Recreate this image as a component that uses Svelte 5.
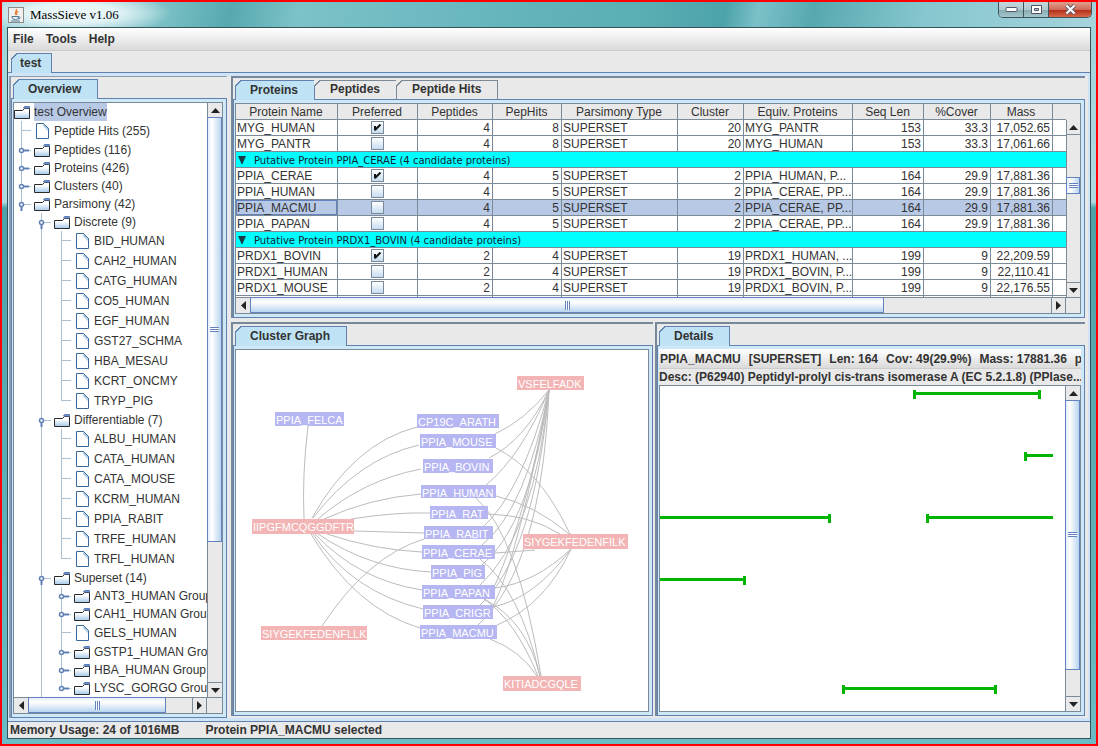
<script>
  const leaves = (names) => names.map((label) => ({ label, kind: 'file' }));
  const groups = (names) => names.map((label) => ({ label, kind: 'folder', open: false }));

  const tree = [
    { label: 'Peptide Hits (255)', kind: 'file' },
    { label: 'Peptides (116)', kind: 'folder', open: false },
    { label: 'Proteins (426)', kind: 'folder', open: false },
    { label: 'Clusters (40)', kind: 'folder', open: false },
    {
      label: 'Parsimony (42)', kind: 'folder', open: true,
      children: [
        {
          label: 'Discrete (9)', kind: 'folder', open: true,
          children: leaves(['BID_HUMAN', 'CAH2_HUMAN', 'CATG_HUMAN', 'CO5_HUMAN', 'EGF_HUMAN', 'GST27_SCHMA', 'HBA_MESAU', 'KCRT_ONCMY', 'TRYP_PIG'])
        },
        {
          label: 'Differentiable (7)', kind: 'folder', open: true,
          children: leaves(['ALBU_HUMAN', 'CATA_HUMAN', 'CATA_MOUSE', 'KCRM_HUMAN', 'PPIA_RABIT', 'TRFE_HUMAN', 'TRFL_HUMAN'])
        },
        {
          label: 'Superset (14)', kind: 'folder', open: true, more: true,
          children: [
            ...groups(['ANT3_HUMAN Group', 'CAH1_HUMAN Group']),
            ...leaves(['GELS_HUMAN']),
            ...groups(['GSTP1_HUMAN Group', 'HBA_HUMAN Group', 'LYSC_GORGO Group'])
          ]
        }
      ]
    }
  ];

  const columns = [
    ['Protein Name', 102], ['Preferred', 80], ['Peptides', 75], ['PepHits', 69],
    ['Parsimony Type', 116], ['Cluster', 66], ['Equiv. Proteins', 109],
    ['Seq Len', 71], ['%Cover', 67], ['Mass', 62]
  ];

  const rows = [
    ['MYG_HUMAN', true, 4, 8, 20, 'MYG_PANTR', 153, '33.3', '17,052.65'],
    ['MYG_PANTR', false, 4, 8, 20, 'MYG_HUMAN', 153, '33.3', '17,061.66'],
    'Putative Protein PPIA_CERAE (4 candidate proteins)',
    ['PPIA_CERAE', true, 4, 5, 2, 'PPIA_HUMAN, P...', 164, '29.9', '17,881.36'],
    ['PPIA_HUMAN', false, 4, 5, 2, 'PPIA_CERAE, PP...', 164, '29.9', '17,881.36'],
    ['PPIA_MACMU', false, 4, 5, 2, 'PPIA_CERAE, PP...', 164, '29.9', '17,881.36'],
    ['PPIA_PAPAN', false, 4, 5, 2, 'PPIA_CERAE, PP...', 164, '29.9', '17,881.36'],
    'Putative Protein PRDX1_BOVIN (4 candidate proteins)',
    ['PRDX1_BOVIN', true, 2, 4, 19, 'PRDX1_HUMAN, ...', 199, '9', '22,209.59'],
    ['PRDX1_HUMAN', false, 2, 4, 19, 'PRDX1_BOVIN, P...', 199, '9', '22,110.41'],
    ['PRDX1_MOUSE', false, 2, 4, 19, 'PRDX1_BOVIN, P...', 199, '9', '22,176.55']
  ];
  const selected = 'PPIA_MACMU';

  // Graph nodes: label, x, y, width, height, kind
  const nodes = [
    ['PPIA_FELCA', 39, 62, 69, 14, 'protein'],
    ['CP19C_ARATH', 181, 64, 82, 14, 'protein'],
    ['PPIA_MOUSE', 184, 84, 76, 14, 'protein'],
    ['PPIA_BOVIN', 187, 109, 70, 14, 'protein'],
    ['PPIA_HUMAN', 185, 135, 75, 13, 'protein'],
    ['PPIA_RAT', 194, 156, 58, 13, 'protein'],
    ['PPIA_RABIT', 188, 176, 69, 13, 'protein'],
    ['PPIA_CERAE', 186, 195, 73, 14, 'protein'],
    ['PPIA_PIG', 195, 215, 54, 14, 'protein'],
    ['PPIA_PAPAN', 186, 235, 73, 14, 'protein'],
    ['PPIA_CRIGR', 187, 255, 70, 14, 'protein'],
    ['PPIA_MACMU', 184, 275, 77, 14, 'protein'],
    ['VSFELFADK', 281, 26, 67, 14, 'peptide'],
    ['SIYGEKFEDENFILK', 287, 184, 105, 15, 'peptide'],
    ['KITIADCGQLE', 267, 326, 78, 15, 'peptide'],
    ['SIYGEKFEDENFLLK', 25, 276, 106, 14, 'peptide'],
    ['IIPGFMCQGGDFTR', 16, 169, 102, 15, 'peptide']
  ];

  const edges = [
    'M72 76Q66 125 68 169',
    'M76 168Q118 93 181 77', 'M77 168Q122 109 183 95', 'M82 169Q127 130 185 119',
    'M88 169Q134 148 185 144', 'M115 169Q159 162 194 163', 'M118 181L188 183',
    'M91 184Q139 200 186 202', 'M82 184Q134 219 195 222', 'M79 184Q122 230 186 240',
    'M77 184Q116 242 187 259', 'M75 184Q120 259 184 278', 'M86 276Q132 206 188 189',
    'M259 84Q289 70 313 40', 'M253 108Q289 90 313 40', 'M250 135Q286 105 313 40',
    'M246 178Q286 142 313 40', 'M246 195Q290 160 313 40',
    'M246 215Q294 176 313 40', 'M244 235Q298 186 313 40', 'M259 235Q292 160 313 40',
    'M244 255Q298 206 313 40', 'M257 257Q284 200 313 40', 'M242 275Q306 216 313 40',
    'M260 98Q304 120 334 184', 'M260 146Q299 155 333 184', 'M252 164Q294 165 324 184',
    'M259 203L299 200', 'M259 238Q299 233 335 199', 'M257 257Q299 248 335 199',
    'M261 275Q309 255 335 199',
    'M240 148Q282 185 305 326', 'M244 209Q284 240 304 326', 'M248 249Q279 270 302 326',
    'M248 249Q290 270 304 326', 'M254 289Q284 300 301 326'
  ];

  // Matched peptide segments: x, y, length, start cap, end cap
  const segments = [
    [253, 8, 128, true, true],
    [364, 70, 29, true, false],
    [0, 132, 171, false, true],
    [266, 132, 127, true, false],
    [0, 194, 86, false, true],
    [182, 303, 155, true, true]
  ];
</script>

{#snippet bar(dir, name, before, size, after)}
  <div class="scroll {dir}">
    <button class="arrow" aria-label="{name} back">
      <svg width="9" height="9" viewBox="0 0 9 9"><path d={dir === 'v' ? 'M0 7L4.500 2L9 7Z' : 'M7 0L2 4.500L7 9Z'} /></svg>
    </button>
    <div class="track">
      <span style:flex-grow={before}></span>
      <span class="thumb" style:flex-grow={size}><i></i></span>
      <span style:flex-grow={after}></span>
    </div>
    <button class="arrow" aria-label="{name} forward">
      <svg width="9" height="9" viewBox="0 0 9 9"><path d={dir === 'v' ? 'M0 2L4.500 7L9 2Z' : 'M2 0L7 4.500L2 9Z'} /></svg>
    </button>
  </div>
{/snippet}

{#snippet folder()}
  <svg class="icon" width="16" height="16" viewBox="0 0 16 16">
    <defs><linearGradient id="fold" x1="0" y1="0" x2="0" y2="1"><stop offset="0.3" stop-color="#fff" /><stop offset="1" stop-color="#a4c8ea" /></linearGradient></defs>
    <path d="M.5 14.500V6.500H8.500L10.500 4.500H15.500V14.500Z" fill="url(#fold)" stroke="#2a2a2a" />
    <path d="M9.500 4L10.500 2.500H15.500V4Z" fill="#86a8dc" stroke="#5a7cba" />
  </svg>
{/snippet}

{#snippet file()}
  <svg class="icon" width="16" height="16" viewBox="0 0 16 16">
    <path d="M2.500 .5H9.500L14.500 5.500V15.500H2.500Z" fill="#fff" stroke="#3a6a9c" />
    <path d="M9.500 1L14 5.500V8L9 3Z" fill="#a8c8e4" />
    <path d="M9.500 .5L14.500 5.500" stroke="#3a6a9c" />
  </svg>
{/snippet}

{#snippet branch(items)}
  <ul>
    {#each items as item}
      <li class:more={item.more}>
        <div class="row {item.kind}">
          {#if item.kind === 'folder'}
            <svg class="knob" width="12" height="12" viewBox="0 0 12 12">
              <path d={item.open ? 'M3.500 5V11' : 'M5 4.500H11'} stroke="#5f80b4" stroke-width="2" />
              <circle cx="3.500" cy="4.500" r="2" fill="#fff" stroke="#5f80b4" stroke-width="1.500" />
            </svg>
            {@render folder()}
          {:else}
            {@render file()}
          {/if}
          <span>{item.label}</span>
        </div>
        {#if item.children}{@render branch(item.children)}{/if}
      </li>
    {/each}
  </ul>
{/snippet}

<div class="window">
  <header class="title">
    <svg class="logo" width="16" height="16" viewBox="0 0 16 16">
      <rect x=".5" y=".5" width="15" height="15" fill="#f0f0ee" stroke="#8a8a8a" />
      <path d="M8 2C10 4 5.500 5 8 8M10 4C7.500 5.500 9.500 6.500 8.500 8" fill="none" stroke="#e8762c" stroke-width="1.200" />
      <path d="M4 9.500H10.500C10.500 12 9.500 12.500 7.500 12.500S4 12 4 9.500M10.500 10C13 9.500 12.500 12 10 12M3 14H12" fill="none" stroke="#4d7a9c" />
    </svg>
    <h1>MassSieve v1.06</h1>
    <div class="controls">
      <button aria-label="Minimize"><svg width="13" height="7" viewBox="0 0 13 7"><rect x="1" y="1.500" width="11" height="4" rx="1" fill="#fff" stroke="#556" /></svg></button>
      <button aria-label="Maximize"><svg width="13" height="11" viewBox="0 0 13 11"><path d="M1.500 1.500H11.500V9.500H1.500ZM4.500 4.500V6.500H8.500V4.500Z" fill="#fff" fill-rule="evenodd" stroke="#556" /></svg></button>
      <button class="close" aria-label="Close"><svg width="13" height="11" viewBox="0 0 13 11"><path d="M2.500 1.500L10.500 9.500M10.500 1.500L2.500 9.500" stroke="#556" stroke-width="4" /><path d="M2.500 1.500L10.500 9.500M10.500 1.500L2.500 9.500" stroke="#fff" stroke-width="2.200" /></svg></button>
    </div>
  </header>

  <main class="client">
    <nav class="menu"><button>File</button><button>Tools</button><button>Help</button></nav>
    <div class="tabs outer"><button class="tab on">test</button></div>

    <div class="work">
      <div class="split">
        <section class="pane left">
          <div class="tabs"><button class="tab on">Overview</button></div>
          <div class="body">
            <div class="inner treebox">
              <div class="tree">
                <div class="row root">{@render folder()}<span class="sel">test Overview</span></div>
                {@render branch(tree)}
              </div>
              {@render bar('v', 'Overview vertical', 0, 424, 141)}
              {@render bar('h', 'Overview horizontal', 0, 136, 26)}
              <div class="corner"></div>
            </div>
          </div>
        </section>

        <div class="right">
          <section class="pane">
            <div class="tabs">
              <button class="tab on">Proteins</button><button class="tab">Peptides</button><button class="tab">Peptide Hits</button>
            </div>
            <div class="body">
              <div class="inner grid">
                <div class="clip">
                  <table>
                    <colgroup>
                      {#each columns as [, w]}<col style:width="{w}px" />{/each}
                      <col />
                    </colgroup>
                    <thead>
                      <tr>{#each columns as [name]}<th>{name}</th>{/each}<th></th></tr>
                    </thead>
                    <tbody>
                      {#each rows as r}
                        {#if typeof r === 'string'}
                          <tr class="group"><td colspan="11"><svg width="8" height="8" viewBox="0 0 8 8"><path d="M0 0H8L4.500 8H3.500Z" /></svg>{r}</td></tr>
                        {:else}
                          <tr class:picked={r[0] === selected}>
                            <td>{r[0]}</td>
                            <td class="check"><input type="checkbox" aria-label="Preferred {r[0]}" checked={r[1]} /></td>
                            <td class="num">{r[2]}</td>
                            <td class="num">{r[3]}</td>
                            <td>SUPERSET</td>
                            <td class="num">{r[4]}</td>
                            <td>{r[5]}</td>
                            <td class="num">{r[6]}</td>
                            <td class="num">{r[7]}</td>
                            <td class="num">{r[8]}</td>
                            <td></td>
                          </tr>
                        {/if}
                      {/each}
                      <tr>{#each columns as _}<td></td>{/each}<td></td></tr>
                    </tbody>
                  </table>
                </div>
                <div class="side">
                  <div class="cap"></div>
                  {@render bar('v', 'Proteins vertical', 43, 15, 88)}
                </div>
                {@render bar('h', 'Proteins horizontal', 0, 632, 167)}
                <div class="corner"></div>
              </div>
            </div>
          </section>

          <div class="lower">
            <section class="pane">
              <div class="tabs"><button class="tab on">Cluster Graph</button></div>
              <div class="body">
                <div class="inner">
                  <svg class="canvas" role="img" aria-label="Cluster Graph">
                    {#each edges as d}<path {d} class="edge" />{/each}
                    {#each nodes as [label, x, y, w, h, kind]}
                      <rect {x} {y} width={w} height={h} class={kind} />
                      <text x={x + 1} y={y + 12}>{label}</text>
                    {/each}
                  </svg>
                </div>
              </div>
            </section>

            <section class="pane details">
              <div class="tabs"><button class="tab on">Details</button></div>
              <div class="body">
                <div class="facts">
                  <span>PPIA_MACMU</span><span>[SUPERSET]</span><span>Len: 164</span><span>Cov: 49(29.9%)</span><span>Mass: 17881.36</span><span>pI</span>
                </div>
                <div class="desc">Desc: (P62940) Peptidyl-prolyl cis-trans isomerase A (EC 5.2.1.8) (PPIase...</div>
                <div class="inner plot">
                  <svg class="canvas" role="img" aria-label="Matched peptides">
                    {#each segments as [x, y, len, start, end]}
                      <rect {x} y={y - 2} width={len} height="3" />
                      {#if start}<rect {x} y={y - 4} width="3" height="9" />{/if}
                      {#if end}<rect x={x + len - 3} y={y - 4} width="3" height="9" />{/if}
                    {/each}
                  </svg>
                  {@render bar('v', 'Details vertical', 0, 267, 26)}
                </div>
              </div>
            </section>
          </div>
        </div>
      </div>
    </div>

    <footer class="status"><span>Memory Usage: 24 of 1016MB</span><span>Protein PPIA_MACMU selected</span></footer>
  </main>
</div>

<style>
  :global(body) { margin: 0; }
  .window, .window * { box-sizing: border-box; }
  .window {
    --face: #e9e9e9;
    --tab: #bfe3f4;
    --line: #5f82b0;
    --grey: #7a8a99;
    --pick: #b8c9e6;
    --ink: #333;
    display: flex;
    flex-direction: column;
    height: 100vh;
    overflow: hidden;
    border: 2px solid #f00;
    background: linear-gradient(#9fd2da 0, #b0dae2 200px, #4fa2a8 206px, #5fb0b6 500px, #6bbcc4 100%);
    color: var(--ink);
    font: 12px/16px "Liberation Sans", Arial, sans-serif;
  }
  button { font: inherit; color: inherit; margin: 0; padding: 0; border: 0; background: none; }

  .title {
    display: flex;
    align-items: center;
    gap: 6px;
    flex: none;
    height: 25px;
    padding-left: 6px;
    background:
      radial-gradient(ellipse 100px 22px at 70px 11px, #eef8fa 0, #e4f4f6 45%, transparent 100%),
      linear-gradient(100deg, #9fd2da 0, #8ccad0 12%, #6db8bd 17%, #56a9ae 21%, #7cc2c8 27%, #66b6bc 45%, #5aaeb4 58%, #4ca3a9 66%, #7cc0c8 69%, #56a9ae 74%, #86c6ce 84%, #a6d4dc 100%);
  }
  .logo { flex: none; }
  h1 { margin: 0; flex: 1; font: 13px/16px "Liberation Serif", serif; color: #000; }
  .controls {
    display: flex;
    align-self: flex-start;
    height: 16px;
    margin-right: 4px;
    border: 1px solid #3c555c;
    border-top: 0;
    border-radius: 0 0 5px 5px;
    overflow: hidden;
  }
  .controls button {
    display: flex;
    align-items: center;
    justify-content: center;
    width: 25px;
    border-right: 1px solid #3c555c;
    background: linear-gradient(#c4d8dc 0, #b0c9ce 50%, #86aab2 51%, #a4c6cc 100%);
  }
  .controls .close { width: 42px; border: 0; background: linear-gradient(#e0a090 0, #cf6a58 50%, #b02a18 51%, #d86848 100%); }

  .client {
    display: flex;
    flex-direction: column;
    flex: 1;
    min-height: 0;
    margin: 0 5px 5px;
    border: 1px solid #34545c;
    background: var(--face);
  }
  .menu {
    display: flex;
    gap: 12px;
    flex: none;
    height: 23px;
    padding-left: 5px;
    border-bottom: 1px solid #ccc;
    background: linear-gradient(#fff, #dadada);
    font-weight: bold;
  }

  .tabs { display: flex; flex: none; height: 20px; padding-left: 2px; box-shadow: inset 0 -1px var(--line); }
  .tabs.outer { height: 22px; padding: 2px 0 0 3px; }
  .tab {
    position: relative;
    height: 20px;
    padding: 0 16px 2px 15px;
    border: 1px solid var(--grey);
    border-left-width: 0;
    border-bottom-color: var(--line);
    background: var(--face);
    font-weight: bold;
  }
  .tab.on { padding-left: 14px; border: 1px solid var(--line); border-bottom: 0; background: var(--tab); }
  .tab::before {
    content: "";
    position: absolute;
    left: -1px;
    top: -1px;
    width: 7px;
    height: 7px;
    background: linear-gradient(135deg, var(--face) 4px, var(--grey) 4px, var(--grey) 5px, transparent 5px);
  }
  .tab.on::before { background: linear-gradient(135deg, var(--face) 4px, var(--line) 4px, var(--line) 5px, transparent 5px); }
  .tabs.outer .tab { padding: 0 10px 2px 8px; }

  .work {
    display: flex;
    flex: 1;
    min-height: 0;
    padding: 3px 2px 3px 1px;
    border-bottom: 1px solid var(--line);
    background: #cfe4f6;
  }
  .split {
    display: grid;
    grid-template-columns: 218px minmax(0, 1fr);
    gap: 4px;
    flex: 1;
    min-height: 0;
    padding-right: 3px;
    background: var(--face);
  }
  .right { display: grid; grid-template-rows: 242px minmax(0, 1fr); gap: 4px; min-height: 0; padding-bottom: 2px; }
  .lower { display: grid; grid-template-columns: 422fr 430fr; gap: 2px; min-height: 0; min-width: 0; }

  .pane {
    display: flex;
    flex-direction: column;
    min-width: 0;
    min-height: 0;
    padding-top: 2px;
    border: 2px solid #76889a;
    border-right: 0;
    border-bottom: 0;
  }
  .pane.left { border-top-width: 1px; border-color: #8e9cb0; }
  .body {
    display: flex;
    flex-direction: column;
    flex: 1;
    min-height: 0;
    padding: 3px 3px 3px 1px;
    border: 1px solid var(--line);
    border-top: 0;
    background: #cfe8f8;
  }
  .inner { flex: 1; min-height: 0; border: 1px solid var(--grey); background: #fff; overflow: hidden; }

  .treebox { display: grid; grid-template: minmax(0, 1fr) 16px / minmax(0, 1fr) 15px; }
  .tree { overflow: hidden; white-space: nowrap; }
  .tree ul { margin: 0; padding: 0 0 0 20px; list-style: none; }
  .row { position: relative; display: flex; align-items: center; gap: 4px; height: 18px; }
  .row.file { height: 20px; }
  .root .sel { padding: 1px 0 1px; background: var(--pick); }
  .icon { flex: none; }
  .knob { position: absolute; left: -16px; top: 5px; }
  .tree li { position: relative; }
  .tree li::before {
    content: "";
    position: absolute;
    left: -13px;
    top: 0;
    bottom: 0;
    width: 1px;
    background: #a9c1d2;
  }
  .tree li:last-child:not(.more)::before { bottom: auto; height: 10px; }
  .tree li .row::before {
    content: "";
    position: absolute;
    left: -12px;
    top: 9px;
    width: 9px;
    height: 1px;
    background: #a9c1d2;
  }

  .scroll { display: flex; background: var(--face); min-width: 0; min-height: 0; }
  .scroll.v { flex-direction: column; border-left: 1px solid var(--grey); }
  .scroll.h { border-top: 1px solid var(--grey); }
  .arrow { display: flex; align-items: center; justify-content: center; flex: none; }
  .arrow path { fill: #222; }
  .v .arrow { height: 15px; }
  .h .arrow { width: 15px; }
  .v .arrow:first-child { border-bottom: 1px solid var(--grey); }
  .v .arrow:last-child { border-top: 1px solid var(--grey); }
  .h .arrow:first-child { border-right: 1px solid var(--grey); }
  .h .arrow:last-child { border-left: 1px solid var(--grey); border-right: 1px solid var(--grey); }
  .track { display: flex; flex: 1; flex-direction: inherit; min-height: 0; }
  .track > span { flex-basis: 0; }
  .thumb { display: flex; align-items: center; justify-content: center; margin: -1px 0 0 -1px; border: 1px solid #6382bf; }
  .v .thumb { background: linear-gradient(90deg, #e4eefa, #fff 30%, #b8d4ee); }
  .h .thumb { background: linear-gradient(#e4eefa, #fff 30%, #b8d4ee); }
  .v .thumb i { width: 9px; height: 5px; background: repeating-linear-gradient(#6382bf 0 1px, #fff 1px 2px); }
  .h .thumb i { width: 5px; height: 9px; background: repeating-linear-gradient(90deg, #6382bf 0 1px, #fff 1px 2px); }
  .corner { background: var(--face); border-top: 1px solid var(--grey); }

  .grid { display: grid; grid-template: minmax(0, 1fr) 16px / minmax(0, 1fr) 14px; }
  .clip { overflow: hidden; min-width: 0; }
  .side { display: flex; flex-direction: column; }
  .side .scroll { flex: 1; }
  .cap { flex: none; height: 16px; background: var(--face); }
  table { width: 100%; border-collapse: separate; border-spacing: 0; table-layout: fixed; }
  tr { height: 16px; }
  th, td {
    height: 16px;
    padding: 2px 2px 0 1px;
    border-right: 1px solid var(--grey);
    border-bottom: 1px solid var(--grey);
    overflow: hidden;
    line-height: 13px;
    text-align: left;
    white-space: nowrap;
  }
  th:last-child, td:last-child { border-right: 0; }
  th { background: var(--face); font-weight: normal; text-align: center; }
  .num { text-align: right; }
  td.check { padding: 0; text-align: center; line-height: 0; }
  .picked td { background: var(--pick); }
  .picked td:first-child { box-shadow: inset 0 0 0 1px #6382bf; }
  .group td { background: #0ff; color: #123; font-family: "DejaVu Sans", sans-serif; font-size: 10px; }
  .group svg { margin: 0 8px 0 1px; fill: #154048; }
  input {
    appearance: none;
    display: inline-block;
    width: 13px;
    height: 13px;
    margin: 1px 0;
    border: 1px solid var(--grey);
    background: linear-gradient(#fff, #c4dcf0);
  }
  input:checked {
    background:
      url('data:image/svg+xml,<svg xmlns="http://www.w3.org/2000/svg" width="11" height="11"><path d="M3 4V8.500M3 8L8.500 2.500" fill="none" stroke="%23111" stroke-width="2"/></svg>'),
      linear-gradient(#fff, #c4dcf0);
  }

  .canvas { display: block; width: 100%; height: 100%; }
  .edge { fill: none; stroke: #bcbcbc; }
  .protein { fill: #b6b6f2; }
  .peptide { fill: #f2b4b4; }
  .canvas text { fill: #fff; font-size: 11px; }

  .facts, .desc { flex: none; font-weight: bold; white-space: nowrap; overflow: hidden; }
  .facts { display: flex; gap: 8px; height: 20px; padding: 2px 1px; border-bottom: 1px solid #ccc; background: linear-gradient(#fff, #dadada); }
  .desc { height: 16px; background: var(--face); }
  .plot { display: grid; grid-template-columns: minmax(0, 1fr) 15px; }
  .plot .canvas { fill: #00b400; }

  .status { display: flex; gap: 26px; flex: none; height: 16px; padding: 1px 0 0 2px; line-height: 15px; font-weight: bold; overflow: hidden; white-space: nowrap; }
</style>
